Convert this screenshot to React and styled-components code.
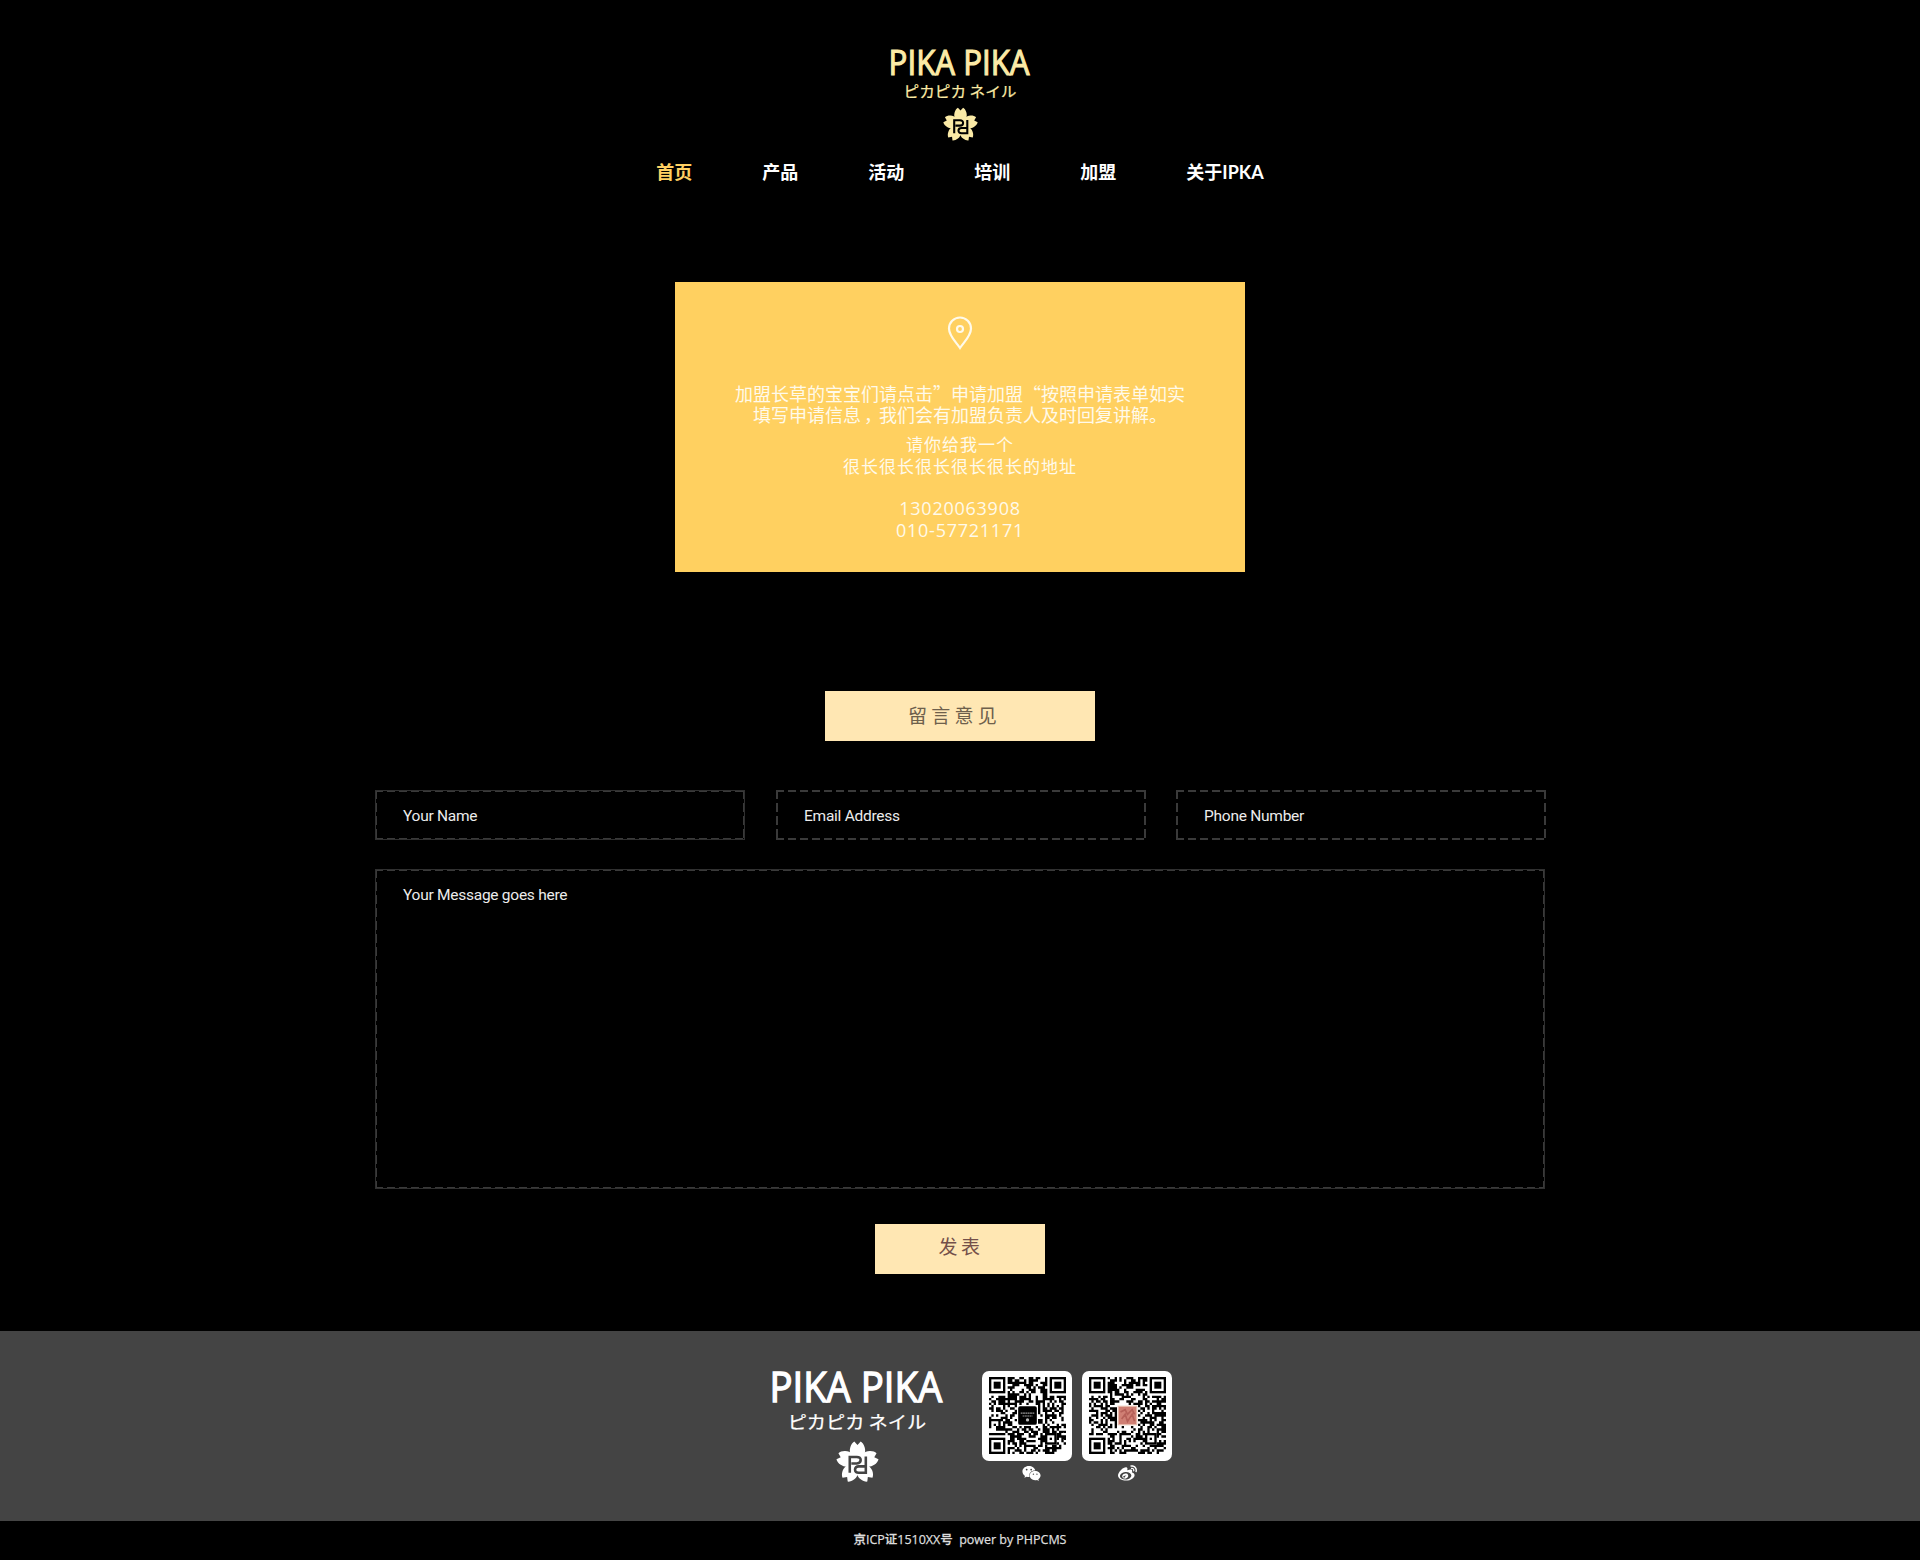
import React from "react";
import styled, { createGlobalStyle } from "styled-components";
import { FaWeixin, FaWeibo } from "react-icons/fa";

const GlobalStyle = createGlobalStyle`
  *, *::before, *::after { box-sizing: border-box; }
  body {
    margin: 0;
    background: #000;
    font-family: "Open Sans", "Noto Sans CJK SC", sans-serif;
  }
`;

const Page = styled.div`
  display: flex;
  flex-direction: column;
  align-items: center;
  width: 100%;
  min-height: 1560px;
  background: #000;
  color: #fff;
`;

const Header = styled.header`
  display: flex;
  flex-direction: column;
  align-items: center;
  padding-top: 33px;
`;

const LogoSvg = styled.svg`
  display: block;
  overflow: visible;
  width: ${(p) => p.$width}px;
  height: ${(p) => (p.$width * 112) / 150}px;
  color: ${(p) => p.$color};
`;

const Nav = styled.nav`
  display: flex;
  gap: 70px;
  margin: 14px 0 0;
  height: 28px;
`;

const NavLink = styled.a`
  font: 700 18px/27px Lato, "Noto Sans CJK SC", sans-serif;
  color: ${(p) => (p.$active ? "#ffd062" : "#fff")};
  white-space: nowrap;
`;

const Card = styled.section`
  display: flex;
  flex-direction: column;
  align-items: center;
  width: 570px;
  height: 290px;
  margin-top: 95px;
  padding-top: 34px;
  background: #ffd060;
  color: #fffaea;
  text-align: center;
  white-space: nowrap;
`;

const Pin = styled.svg`
  display: block;
  width: 28px;
  height: 36px;
`;

const Notice = styled.p`
  margin: 31px 0 0;
  font: 400 18px/21.4px "Noto Sans CJK SC", sans-serif;
`;

const Comma = styled.span`
  display: inline-block;
  width: 18px;
  text-indent: 3px;
`;

const Address = styled.p`
  margin: 7px 0 0;
  font: 400 17px/22px "Noto Sans CJK SC", sans-serif;
  letter-spacing: 1px;
`;

const Phones = styled.p`
  margin: 20px 0 0;
  font: 400 18px/22px "Open Sans", sans-serif;
  letter-spacing: 0.75px;
`;

const Button = styled.div`
  width: ${(p) => p.$width}px;
  height: 50px;
  margin-top: ${(p) => p.$top}px;
  padding: 0 ${(p) => p.$right || 0}px 0 ${(p) => p.$left || 0}px;
  background: #ffe7b3;
  color: ${(p) => p.$color};
  font: 400 19px/${(p) => p.$line}px "Noto Sans CJK SC", sans-serif;
  letter-spacing: ${(p) => p.$tracking}px;
  text-align: center;
`;

const Form = styled.form`
  display: grid;
  grid-template-columns: 371px 370px 370px;
  column-gap: 30px;
  row-gap: 29px;
  width: 1171px;
  margin: 49px 0 0 1px;
`;

const dashX = "repeating-linear-gradient(90deg, #3a3a3a 0 8px, transparent 8px 12px)";
const dashY = "repeating-linear-gradient(180deg, #3a3a3a 0 9px, transparent 9px 13px)";

const Field = styled.label`
  grid-column: ${(p) => (p.$wide ? "1 / -1" : "auto")};
  width: ${(p) => (p.$wide ? 1170 : 370)}px;
  height: ${(p) => (p.$wide ? 320 : 50)}px;
  padding: 1px 28px 0;
  background:
    ${dashX} 0 0 / 100% 2px no-repeat,
    ${dashX} 0 100% / 100% 2px no-repeat,
    ${dashY} 0 0 / 2px 100% no-repeat,
    ${dashY} 100% 0 / 2px 100% no-repeat;
  box-shadow: ${(p) => (p.$lined ? "inset 0 0 0 1px #303030" : "none")};
  font: 400 15.5px/50px Roboto, sans-serif;
  letter-spacing: -0.26px;
  color: #ececec;
`;

const Footer = styled.footer`
  display: flex;
  justify-content: center;
  width: 100%;
  height: 190px;
  margin-top: 57px;
  padding: 19.3px 0 0 17px;
  background: #444;
`;

const Codes = styled.div`
  display: flex;
  gap: 10px;
  margin: 20.7px 0 0 34px;
`;

const Code = styled.div`
  display: flex;
  flex-direction: column;
  align-items: center;
  color: #fff;
`;

const Plate = styled.div`
  width: 90px;
  height: 90px;
  padding: 6.5px;
  border-radius: 7px;
  background: #fff;
`;

const QrSvg = styled.svg`
  display: block;
  width: 77px;
  height: 77px;
`;

const Social = styled.div`
  margin: 3px 0 0 ${(p) => p.$shift}px;
  font-size: 19px;
  line-height: 0;
`;

const Legal = styled.div`
  font: 500 12.5px/37px "Open Sans", "Noto Sans CJK SC", sans-serif;
  -webkit-text-stroke: 0.25px #ddd;
  letter-spacing: -0.02px;
  height: 39px;
  color: #ddd;
  white-space: pre;
`;

function Logo({ width, color, ink }) {
  return (
    <LogoSvg viewBox="0 -12 150 112" $width={width} $color={color} fill="currentColor">
      <text x="3.6" y="30.3" fontFamily="Open Sans" fontWeight="500" fontSize="34" stroke="currentColor" strokeWidth="1.1" textLength="141" lengthAdjust="spacingAndGlyphs">
        PIKA PIKA
      </text>
      <text x="18.5" y="52.3" fontFamily="Noto Sans CJK JP" fontWeight="400" fontSize="14.5" stroke="currentColor" strokeWidth="0.2" textLength="113" lengthAdjust="spacingAndGlyphs">
        ピカピカ ネイル
      </text>
      <g transform="translate(75.5 80)">
        <circle r="7" />
        {[0, 72, 144, 216, 288].map((a) => (
          <path
            key={a}
            transform={`rotate(${a})`}
            d="M0 0C-5-4-7.2-8-5.900-12.500C-5.300-14.600-4-16.400-2.600-17.200L0-14.400L2.600-17.200C4-16.400 5.300-14.600 5.900-12.500C7.200-8 5-4 0 0Z"
          />
        ))}
        <g fill="none" stroke={ink} strokeWidth="2.100">
          <path d="M-6.300 8.200V-4.700H-.5Q2.600-4.700 2.600-2.100T-.5.6H-5" />
          <path d="M6.800-5V8.200H1Q-2 8.200-2 5.600T1 3H6" />
        </g>
      </g>
    </LogoSvg>
  );
}

const SIZE = 33;

function buildModules(seed) {
  let s = seed;
  const next = () => {
    s = (s * 1103515245 + 12345) % 2147483648;
    return s / 2147483648;
  };
  let d = "";
  for (let y = 0; y < SIZE; y++) {
    for (let x = 0; x < SIZE; x++) {
      const on = next() < 0.54;
      const finder = (x < 8 && y < 8) || (x > 24 && y < 8) || (x < 8 && y > 24);
      const align = x > 23 && x < 29 && y > 23 && y < 29;
      const middle = x > 11 && x < 21 && y > 11 && y < 21;
      if (on && !finder && !align && !middle) d += `M${x} ${y}h1v1h-1z`;
    }
  }
  return d;
}

function QrCode({ seed, children }) {
  return (
    <Plate>
      <QrSvg viewBox="0 0 33 33">
        <path d={buildModules(seed)} shapeRendering="geometricPrecision" />
        {[[0, 0], [26, 0], [0, 26]].map(([x, y]) => (
          <g key={`${x}-${y}`} transform={`translate(${x} ${y})`}>
            <rect x=".5" y=".5" width="6" height="6" fill="none" stroke="#000" />
            <rect x="2" y="2" width="3" height="3" />
          </g>
        ))}
        <rect x="24.5" y="24.5" width="4" height="4" fill="none" stroke="#000" />
        <rect x="26" y="26" width="1" height="1" />
        {children}
      </QrSvg>
    </Plate>
  );
}

const links = ["首页", "产品", "活动", "培训", "加盟", "关于IPKA"];

export default function App() {
  return (
    <Page>
      <GlobalStyle />
      <Header>
        <Logo width={150} color="#fbeaa6" ink="#000" />
        <Nav>
          {links.map((label, i) => (
            <NavLink key={label} $active={i === 0}>{label}</NavLink>
          ))}
        </Nav>
      </Header>

      <Card>
        <Pin viewBox="0 0 28 36" fill="none" stroke="#fffaea" strokeWidth="2.2">
          <path d="M14 32C10 26 3 20 3 12.5A11 11 0 0 1 25 12.5C25 20 18 26 14 32Z" />
          <circle cx="14" cy="13" r="3" />
        </Pin>
        <Notice>
          加盟长草的宝宝们请点击”申请加盟“按照申请表单如实
          <br />
          填写申请信息<Comma>，</Comma>我们会有加盟负责人及时回复讲解。
        </Notice>
        <Address>
          请你给我一个
          <br />
          很长很长很长很长很长的地址
        </Address>
        <Phones>
          13020063908
          <br />
          010-57721171
        </Phones>
      </Card>

      <Button $width={270} $top={119} $right={11} $line={48} $tracking={4.2} $color="#6e604c">留言意见</Button>

      <Form>
        <Field $lined>Your Name</Field>
        <Field>Email Address</Field>
        <Field>Phone Number</Field>
        <Field $wide $lined>Your Message goes here</Field>
      </Form>

      <Button $width={170} $top={35} $left={2} $line={44} $tracking={3.6} $color="#74504a">发表</Button>

      <Footer>
        <Logo width={183.75} color="#fff" ink="#444" />
        <Codes>
          <Code>
            <QrCode seed={4217}>
              <rect x="12.5" y="12.5" width="8" height="8" rx=".8" />
              <path d="M13.6 15.5h5.8M14.4 16.7h4.2" stroke="#999" strokeWidth=".5" strokeDasharray=".8 .2" />
              <circle cx="16.5" cy="18.4" r=".7" fill="#bbb" />
            </QrCode>
            <Social $shift={8}><FaWeixin /></Social>
          </Code>
          <Code>
            <QrCode seed={90731}>
              <rect x="12.3" y="12.3" width="8.4" height="8.4" fill="#e9c4b4" />
              <rect x="12.8" y="12.8" width="7.4" height="7.4" fill="#cf7f74" />
              <path d="M13.5 15l2-1 1 2 2-2 1 2M14 18l1.5-2 1 3 2-3 1 3" fill="none" stroke="#b55f58" strokeWidth=".7" />
            </QrCode>
            <Social $shift={1}><FaWeibo /></Social>
          </Code>
        </Codes>
      </Footer>
      <Legal>京ICP证1510XX号  power by PHPCMS</Legal>
    </Page>
  );
}
